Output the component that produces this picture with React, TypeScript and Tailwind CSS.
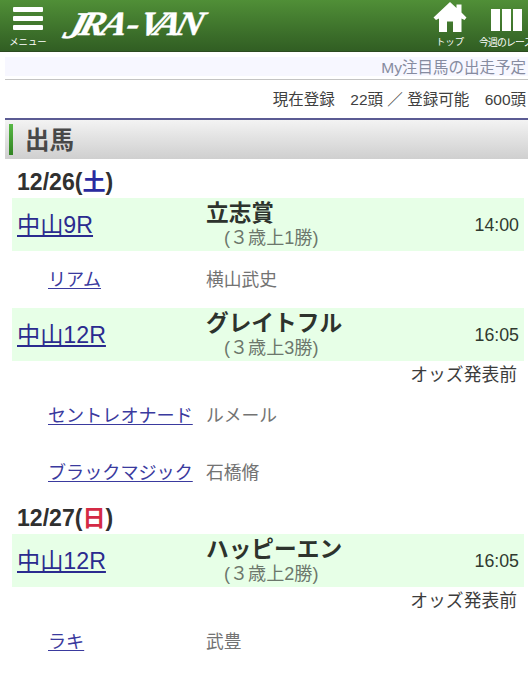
interface Horse {
  name: string;
  jockey: string;
}

interface Race {
  id: string;
  course: string;
  title: string;
  grade: string;
  time: string;
  oddsNote?: string;
  horses: Horse[];
}

interface RaceDay {
  date: string;
  weekday: string;
  weekdayColor: string;
  races: Race[];
}

const raceDays: RaceDay[] = [
  {
    date: '12/26',
    weekday: '土',
    weekdayColor: '#2a2aa0',
    races: [
      {
        id: '1226-9',
        course: '中山9R',
        title: '立志賞',
        grade: '(３歳上1勝)',
        time: '14:00',
        horses: [{ name: 'リアム', jockey: '横山武史' }],
      },
      {
        id: '1226-12',
        course: '中山12R',
        title: 'グレイトフル',
        grade: '(３歳上3勝)',
        time: '16:05',
        oddsNote: 'オッズ発表前',
        horses: [
          { name: 'セントレオナード', jockey: 'ルメール' },
          { name: 'ブラックマジック', jockey: '石橋脩' },
        ],
      },
    ],
  },
  {
    date: '12/27',
    weekday: '日',
    weekdayColor: '#d42a45',
    races: [
      {
        id: '1227-12',
        course: '中山12R',
        title: 'ハッピーエン',
        grade: '(３歳上2勝)',
        time: '16:05',
        oddsNote: 'オッズ発表前',
        horses: [{ name: 'ラキ', jockey: '武豊' }],
      },
    ],
  },
];

function Logo() {
  return (
    <svg width="156" height="42" viewBox="0 0 156 42" className="mt-[5px] ml-[10px] shrink-0 overflow-visible" role="img" aria-label="JRA-VAN">
      <text
        transform="translate(0 30) skewX(-16) scale(1.14 1)"
        fontFamily="'Liberation Serif', serif"
        fontSize="34"
        fontWeight="700"
        fontStyle="italic"
        fill="#fff"
        stroke="#fff"
        strokeWidth="0.3"
      >
        <tspan x="5" y="3" fontSize="38">
          J
        </tspan>
        <tspan x="18 37 59 70 84 102" y="0">
          RA-VAN
        </tspan>
      </text>
    </svg>
  );
}

function Header() {
  return (
    <header className="flex h-[52px] shrink-0 items-start border-b border-[#2c4a20] bg-linear-to-b from-[#508f37] to-[#315e23] text-[9.4px] leading-[13px] text-white">
      <button className="ml-[9px] flex w-[38px] shrink-0 flex-col items-center pt-[7px]" aria-label="メニュー">
        <span className="flex w-[30px] flex-col gap-[4px]">
          <span className="h-[5px] rounded-[1px] bg-white" />
          <span className="h-[5px] rounded-[1px] bg-white" />
          <span className="h-[5px] rounded-[1px] bg-white" />
        </span>
        <span className="mt-[5px]">メニュー</span>
      </button>
      <Logo />
      <div className="ml-auto flex shrink-0">
        <a className="flex w-[36px] flex-col items-center">
          <svg width="34" height="33" viewBox="0 0 34 33" className="mt-[1px]" fill="#fff">
            <path d="M17 1 L23.5 7 V3.5 H28.5 V11.5 L33.5 16.5 L31.5 19 L28.5 17.5 V31 H20 V20.5 H14 V31 H6 V17.5 L3 19 L0.5 16.5 Z" />
          </svg>
          <span className="mt-[1px]">トップ</span>
        </a>
        <a className="ml-[11px] flex w-[49px] flex-col">
          <span className="mt-[9px] ml-[12px] flex gap-[2px]">
            <span className="h-[22px] w-[9px] shrink-0 bg-white" />
            <span className="h-[22px] w-[9px] shrink-0 bg-white" />
            <span className="h-[22px] w-[9px] shrink-0 bg-white" />
          </span>
          <span className="mt-[5px] text-[9.9px] tracking-[-0.85px]">今週のレース</span>
        </a>
      </div>
    </header>
  );
}

function RaceRow({ race }: { race: Race }) {
  return (
    <section>
      <div className="mr-[4px] ml-[12px] flex h-[53px] items-center bg-[#e7ffe7]">
        <a className="ml-[5px] w-[189px] text-[23.2px] leading-[30px] text-[#2b2b8f] underline decoration-[1.5px] underline-offset-[2px]">
          {race.course}
        </a>
        <div className="flex flex-col pt-[1px]">
          <span className="text-[22.7px] leading-[26px] font-bold text-[#2d332d]">{race.title}</span>
          <span className="pl-[18px] text-[18.1px] leading-[24px] text-[#6c776c]">{race.grade}</span>
        </div>
        <span className="mt-[1px] mr-[5px] ml-auto text-[17.8px] text-[#303a30]">{race.time}</span>
      </div>
      {race.oddsNote && (
        <div className="h-[26px] pr-[11px] text-right text-[17.8px] leading-[28px] text-[#3c3c3c]">{race.oddsNote}</div>
      )}
      {race.horses.map((horse) => (
        <div key={horse.name} className="flex h-[57px] items-center pt-[2px] pl-[48px] text-[18.1px]">
          <div className="w-[158px] shrink-0">
            <a className="text-[#3a3a9e] underline decoration-[1.3px] underline-offset-[2px]">{horse.name}</a>
          </div>
          <span className="text-[17.8px] text-[#737373]">{horse.jockey}</span>
        </div>
      ))}
    </section>
  );
}

export default function App() {
  return (
    <div className="flex h-[680px] w-[528px] flex-col overflow-hidden bg-white font-['Liberation_Sans','Noto_Sans_CJK_JP',sans-serif] whitespace-nowrap">
      <Header />
      <div className="mt-[5px] ml-[5px] h-[23px] border-b border-[#c4c4c4] bg-white">
        <div className="h-[19px] bg-[#f7f7ff] pr-[2px] text-right text-[15.5px] leading-[21px] text-[#868ba0]">
          My注目馬の出走予定
        </div>
      </div>
      <div className="h-[38px] pr-[2px] text-right text-[15.5px] leading-[40px] text-[#404040]">
        現在登録　22頭 ／ 登録可能　600頭
      </div>
      <div className="ml-[5px] flex h-[41px] items-center border-t-2 border-[#5b5b93] bg-linear-to-b from-[#f3f3f3] to-[#cfcfcf]">
        <span className="ml-[4px] h-[31px] w-[4px] bg-linear-to-b from-[#58b845] to-[#318422]" />
        <h1 className="mt-[2px] ml-[12px] text-[24.5px] leading-[36px] font-bold text-[#484848]">出馬</h1>
      </div>
      <main className="pt-[6px]">
        {raceDays.map((day) => (
          <div key={day.date}>
            <h2 className="h-[33px] pl-[17px] text-[23.1px] leading-[35px] font-bold text-[#303030]">
              {day.date}(<span style={{ color: day.weekdayColor }}>{day.weekday}</span>)
            </h2>
            {day.races.map((race) => (
              <RaceRow key={race.id} race={race} />
            ))}
          </div>
        ))}
      </main>
    </div>
  );
}
